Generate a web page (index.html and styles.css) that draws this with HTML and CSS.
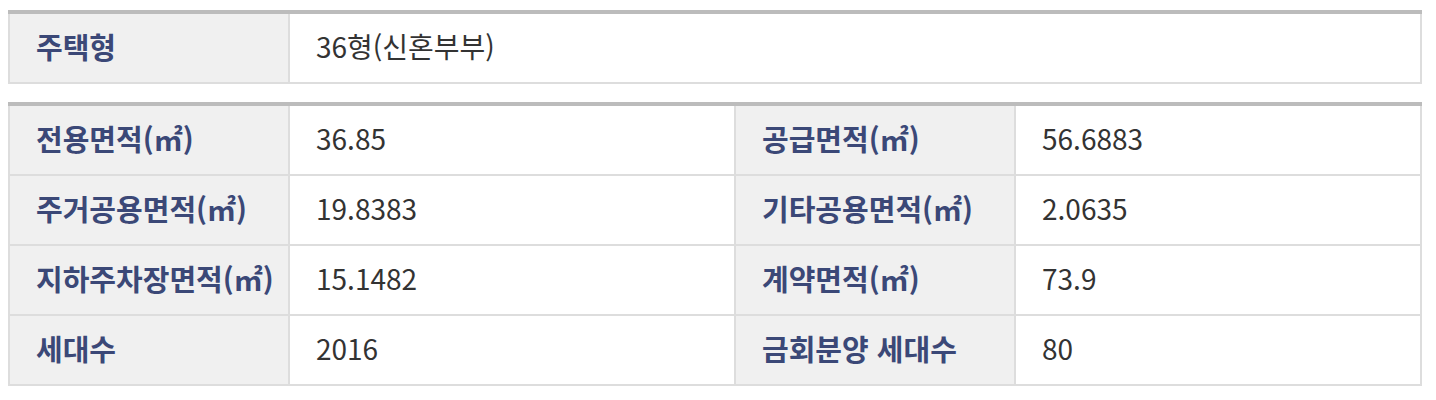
FILE: index.html
```html
<!DOCTYPE html>
<html lang="ko">
<head>
<meta charset="utf-8">
<link rel="stylesheet" href="styles.css">
</head>
<body>
<div class="sheet sheet-type">
  <div class="th">주택형</div>
  <div class="td">36형(신혼부부)</div>
</div>
<div class="sheet sheet-area">
  <div class="th">전용면적(㎡)</div>
  <div class="td">36.85</div>
  <div class="th">공급면적(㎡)</div>
  <div class="td">56.6883</div>
  <div class="th">주거공용면적(㎡)</div>
  <div class="td">19.8383</div>
  <div class="th">기타공용면적(㎡)</div>
  <div class="td">2.0635</div>
  <div class="th">지하주차장면적(㎡)</div>
  <div class="td">15.1482</div>
  <div class="th">계약면적(㎡)</div>
  <div class="td">73.9</div>
  <div class="th">세대수</div>
  <div class="td">2016</div>
  <div class="th">금회분양 세대수</div>
  <div class="td">80</div>
</div>
</body>
</html>
```
FILE: styles.css
```css
html, body {
  margin: 0;
  padding: 0;
  background: #fff;
}
body {
  padding: 10px 14px 0 8px;
  font-family: "Noto Sans CJK KR", "Noto Sans", sans-serif;
}
.sheet {
  display: grid;
  gap: 2px;
  background: #dddddd;
  border-top: 4px solid #bcbcbc;
  padding: 0 2px 2px 2px;
  width: 1414px;
  box-sizing: border-box;
}
.sheet-type {
  grid-template-columns: 278px 1fr;
  margin-bottom: 18px;
}
.sheet-area {
  grid-template-columns: 278px 444px 278px 1fr;
}
.th, .td {
  height: 68px;
  display: flex;
  align-items: center;
  padding: 0 0 4px 26px;
  box-sizing: border-box;
  white-space: nowrap;
}
.th {
  background: #f0f0f0;
  color: #3b4877;
  font-weight: 700;
  font-size: 29px;
}
.td {
  background: #fff;
  color: #333;
  font-size: 28px;
}
```
